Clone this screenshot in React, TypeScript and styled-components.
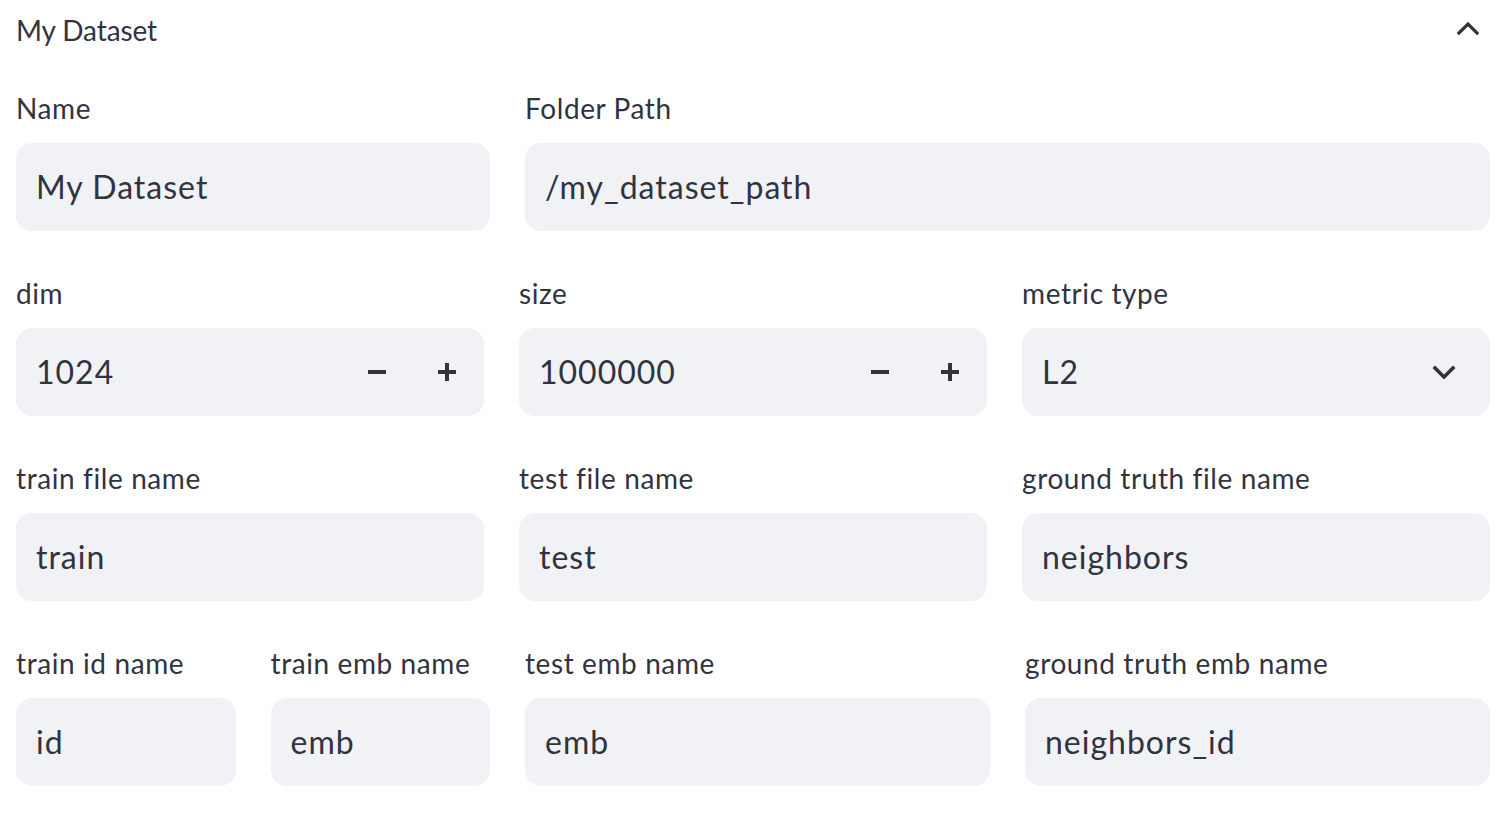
import React from "react";
import styled, { createGlobalStyle } from "styled-components";

const GlobalStyle = createGlobalStyle`
  html, body {
    margin: 0;
    padding: 0;
    background: #ffffff;
  }
  body {
    font-family: "Lato", "Noto Sans", sans-serif;
    color: #31333f;
  }
`;

const ChevronUp = () => (
  <svg width="24" height="16" viewBox="0 0 24 16" fill="none">
    <polyline
      points="3,13 12,4 21,13"
      stroke="#31333f"
      strokeWidth="3.2"
      strokeLinecap="square"
    />
  </svg>
);

const ChevronDown = () => (
  <svg width="26" height="18" viewBox="0 0 26 18" fill="none">
    <polyline
      points="4,5 13,14 22,5"
      stroke="#31333f"
      strokeWidth="3.6"
      strokeLinecap="square"
    />
  </svg>
);

const MinusIcon = () => (
  <svg width="20" height="20" viewBox="0 0 20 20">
    <rect x="1" y="8" width="18" height="4" fill="#31333f" />
  </svg>
);

const PlusIcon = () => (
  <svg width="20" height="20" viewBox="0 0 20 20">
    <rect x="1" y="8" width="18" height="4" fill="#31333f" />
    <rect x="8" y="1" width="4" height="18" fill="#31333f" />
  </svg>
);

type FieldProps = { label: string; value: string };

const TextField = ({ label, value }: FieldProps) => (
  <Field>
    <Label>{label}</Label>
    <InputBox>
      <Value>{value}</Value>
    </InputBox>
  </Field>
);

const NumberField = ({ label, value }: FieldProps) => (
  <Field>
    <Label>{label}</Label>
    <InputBox $endPad={2}>
      <Value>{value}</Value>
      <StepButton>
        <MinusIcon />
      </StepButton>
      <StepButton>
        <PlusIcon />
      </StepButton>
    </InputBox>
  </Field>
);

const SelectField = ({ label, value }: FieldProps) => (
  <Field>
    <Label>{label}</Label>
    <InputBox $endPad={16}>
      <Value>{value}</Value>
      <SelectArrow>
        <ChevronDown />
      </SelectArrow>
    </InputBox>
  </Field>
);

const App = () => {
  return (
    <>
      <GlobalStyle />
      <Page>
        <Header>
          <Title>My Dataset</Title>
          <Toggle>
            <ChevronUp />
          </Toggle>
        </Header>
        <Form>
          <SplitRow>
            <TextField label="Name" value="My Dataset" />
            <TextField label="Folder Path" value="/my_dataset_path" />
          </SplitRow>
          <ThreeRow>
            <NumberField label="dim" value="1024" />
            <NumberField label="size" value="1000000" />
            <SelectField label="metric type" value="L2" />
          </ThreeRow>
          <ThreeRow>
            <TextField label="train file name" value="train" />
            <TextField label="test file name" value="test" />
            <TextField label="ground truth file name" value="neighbors" />
          </ThreeRow>
          <SplitRow>
            <PairRow>
              <TextField label="train id name" value="id" />
              <TextField label="train emb name" value="emb" />
            </PairRow>
            <PairRow>
              <TextField label="test emb name" value="emb" />
              <TextField label="ground truth emb name" value="neighbors_id" />
            </PairRow>
          </SplitRow>
        </Form>
      </Page>
    </>
  );
};

export default App;

const Page = styled.div`
  width: 1474px;
  padding: 0 18px 0 16px;
`;

const Header = styled.div`
  height: 60px;
  display: flex;
  align-items: center;
  justify-content: space-between;
`;

const Title = styled.div`
  font-size: 28px;
  letter-spacing: -0.1px;
  color: #31333f;
`;

const Toggle = styled.div`
  display: flex;
  align-items: center;
  margin-right: 10px;
  margin-top: -4px;
`;

const Form = styled.div`
  padding-top: 28px;
  display: flex;
  flex-direction: column;
  gap: 42px;
`;

const SplitRow = styled.div`
  display: grid;
  grid-template-columns: 474fr 965fr;
  column-gap: 35px;
`;

const ThreeRow = styled.div`
  display: grid;
  grid-template-columns: 1fr 1fr 1fr;
  column-gap: 35px;
`;

const PairRow = styled.div`
  display: grid;
  grid-template-columns: 1fr 1fr;
  column-gap: 35px;
`;

const Field = styled.div`
  display: flex;
  flex-direction: column;
  min-width: 0;
`;

const Label = styled.label`
  height: 40px;
  line-height: 40px;
  font-size: 28px;
  letter-spacing: 0.6px;
  margin-bottom: 15px;
  white-space: nowrap;
`;

const InputBox = styled.div<{ $endPad?: number }>`
  height: 88px;
  box-sizing: border-box;
  background: #f0f2f6;
  border-radius: 16px;
  display: flex;
  align-items: center;
  padding-left: 20px;
  padding-right: ${(p) => p.$endPad ?? 20}px;
`;

const Value = styled.div`
  flex: 1;
  font-size: 32px;
  letter-spacing: 1px;
  color: #31333f;
  white-space: nowrap;
  margin-top: -2px;
`;

const StepButton = styled.div`
  width: 70px;
  height: 100%;
  display: flex;
  align-items: center;
  justify-content: center;
`;

const SelectArrow = styled.div`
  width: 60px;
  display: flex;
  align-items: center;
  justify-content: center;
`;
